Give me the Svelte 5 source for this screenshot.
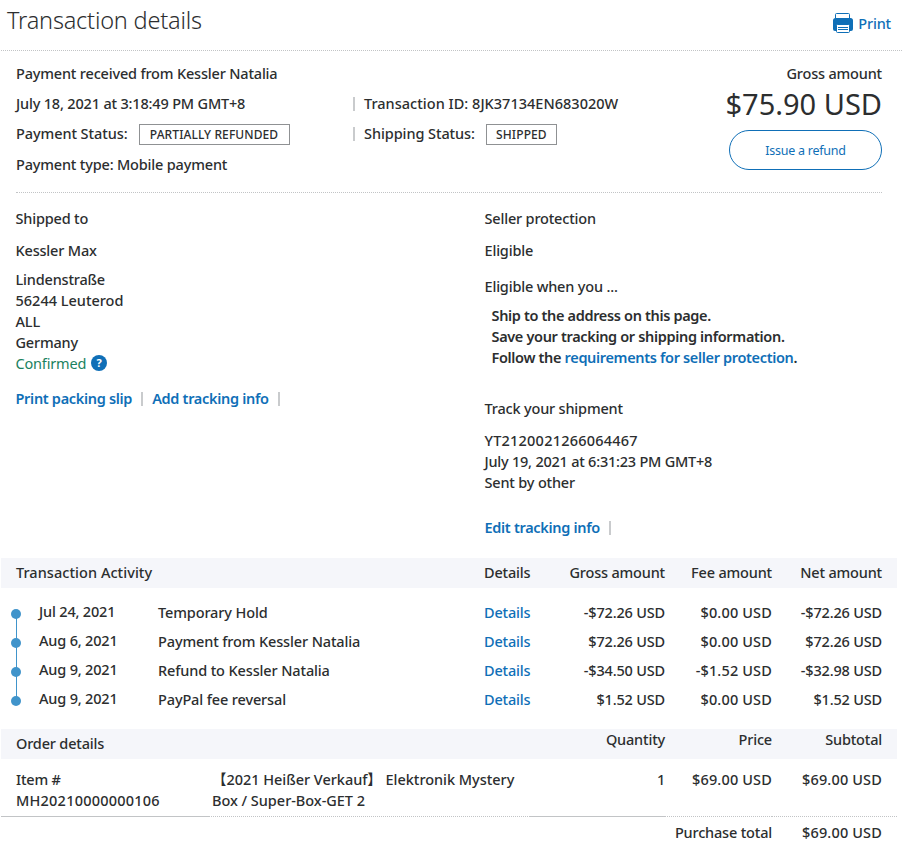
<script lang="ts">
	const activity = [
		{ date: 'Jul 24, 2021', type: 'Temporary Hold', gross: '-$72.26 USD', fee: '$0.00 USD', net: '-$72.26 USD' },
		{ date: 'Aug 6, 2021', type: 'Payment from Kessler Natalia', gross: '$72.26 USD', fee: '$0.00 USD', net: '$72.26 USD' },
		{ date: 'Aug 9, 2021', type: 'Refund to Kessler Natalia', gross: '-$34.50 USD', fee: '-$1.52 USD', net: '-$32.98 USD' },
		{ date: 'Aug 9, 2021', type: 'PayPal fee reversal', gross: '$1.52 USD', fee: '$0.00 USD', net: '$1.52 USD' }
	];
</script>

<div class="page">
	<header>
		<h1>Transaction details</h1>
		<a class="print" href="#print">
			<svg width="20" height="20" viewBox="0 0 20 20">
				<path d="M2.500 5V1.500Q2.500 .5 3.500 .5H15.500Q16.500 .5 16.500 1.500V5" fill="#fff" stroke="#0f6fb7" />
				<path d="M2.500 5h15Q20 5 20 7.500v8.500q0 2-2 2H2q-2 0-2-2V7.500q0-2.500 2.500-2.500z" fill="#0f6fb7" />
				<rect x="3.500" y="11.500" width="13" height="8" rx="1" fill="#fff" stroke="#0f6fb7" />
				<path d="M5 14.500h10M5 16.500h10" stroke="#0f6fb7" />
			</svg>
			<span>Print</span>
		</a>
	</header>

	<section class="summary">
		<div class="facts">
			<div class="line">Payment received from Kessler Natalia</div>
			<div class="line two">
				<span>July 18, 2021 at 3:18:49 PM GMT+8</span>
				<span class="second"><i class="bar"></i><span class="txid">Transaction ID: 8JK37134EN683020W</span></span>
			</div>
			<div class="line two">
				<span class="status"><span class="key">Payment Status:</span><b class="tag partial">PARTIALLY REFUNDED</b></span>
				<span class="second status"><i class="bar"></i><span class="key">Shipping Status:</span><b class="tag shipped">SHIPPED</b></span>
			</div>
			<div class="line last">Payment type: Mobile payment</div>
		</div>
		<div class="gross">
			<div>Gross amount</div>
			<div class="amount">$75.90 USD</div>
			<button type="button">Issue a refund</button>
		</div>
	</section>

	<section class="info">
		<div class="shipping">
			<div class="label">Shipped to</div>
			<div class="name">Kessler Max</div>
			<address>
				<div>Lindenstraße</div>
				<div class="zip">56244 Leuterod</div>
				<div>ALL</div>
				<div>Germany</div>
				<div class="confirmed">Confirmed <span class="help">?</span></div>
			</address>
			<div class="actions">
				<a href="#slip">Print packing slip</a><i class="bar"></i><a href="#track">Add tracking info</a><i class="bar"></i>
			</div>
		</div>
		<div class="protection">
			<div class="label">Seller protection</div>
			<div class="name">Eligible</div>
			<div class="when">Eligible when you ...</div>
			<ul>
				<li>Ship to the address on this page.</li>
				<li>Save your tracking or shipping information.</li>
				<li>Follow the <a href="#req">requirements for seller protection</a>.</li>
			</ul>
			<div class="label">Track your shipment</div>
			<div class="shipment">
				<div class="digits">YT2120021266064467</div>
				<div class="time">July 19, 2021 at 6:31:23 PM GMT+8</div>
				<div>Sent by other</div>
			</div>
			<div class="actions">
				<a href="#edit">Edit tracking info</a><i class="bar"></i>
			</div>
		</div>
	</section>

	<section class="activity">
		<div class="row band">
			<span class="title">Transaction Activity</span>
			<span>Details</span>
			<span class="num">Gross amount</span>
			<span class="num">Fee amount</span>
			<span class="num">Net amount</span>
		</div>
		<div class="rows">
			{#each activity as item}
				<div class="row">
					<span class="dot"></span>
					<span class="date">{item.date}</span>
					<span class="type">{item.type}</span>
					<a href="#details">Details</a>
					<span class="num">{item.gross}</span>
					<span class="num money">{item.fee}</span>
					<span class="num">{item.net}</span>
				</div>
			{/each}
		</div>
	</section>

	<section class="order">
		<div class="order-row band">
			<span class="order-title">Order details</span>
			<span></span>
			<span class="num">Quantity</span>
			<span class="num">Price</span>
			<span class="num">Subtotal</span>
		</div>
		<div class="order-row item">
			<span class="sku">Item #<br /><span class="digits">MH20210000000106</span></span>
			<span class="desc">【2021 Heißer Verkauf】 Elektronik Mystery<br />Box / Super-Box-GET 2</span>
			<span class="num">1</span>
			<span class="num money">$69.00 USD</span>
			<span class="num money">$69.00 USD</span>
		</div>
		<div class="total">
			<span>Purchase total</span>
			<span class="money">$69.00 USD</span>
		</div>
	</section>
</div>

<style>
	:global(body) {
		margin: 0;
		background: #fff;
	}

	.page {
		width: 902px;
		height: 853px;
		overflow: hidden;
		font-family: 'Noto Sans', 'Noto Sans CJK SC', sans-serif;
		font-size: 14.5px;
		font-weight: 500;
		line-height: 21px;
		letter-spacing: -0.18px;
		color: #2c2e2f;
		white-space: nowrap;
	}
	a {
		color: #0f6fb7;
		text-decoration: none;
	}
	.num { text-align: right; }
	.money { letter-spacing: 0.15px; }
	.digits { letter-spacing: 0.22px; }
	.time { letter-spacing: -0.23px; }
	.txid { letter-spacing: 0.02px; }
	.key { letter-spacing: -0.08px; }
	.zip { letter-spacing: 0; }

	/* --- Header --- */
	header {
		display: flex;
		justify-content: space-between;
		height: 51px;
		margin-left: 1px;
		padding: 0 11px 0 6px;
		border-bottom: 1px dotted #c2c4c6;
		box-sizing: border-box;
	}
	h1 {
		margin: 0;
		font-size: 23.5px;
		font-weight: 300;
		line-height: 41px;
		letter-spacing: -0.2px;
	}
	.print {
		display: flex;
		gap: 5px;
		padding-top: 13px;
	}

	/* --- Payment summary --- */
	.summary {
		display: flex;
		justify-content: space-between;
		height: 142px;
		margin: 0 20px 0 16px;
		padding-top: 12px;
		border-bottom: 1px dotted #c2c4c6;
		box-sizing: border-box;
	}
	.line { height: 30px; }
	.line.last { padding-top: 1px; }
	.two {
		display: grid;
		grid-template-columns: 337px auto;
	}
	.second,
	.status {
		display: flex;
		align-items: center;
		height: 21px;
	}
	.bar {
		width: 2px;
		height: 14px;
		background: #c9cbcd;
	}
	.second .bar { margin-right: 9px; }
	.tag {
		position: relative;
		top: 1px;
		height: 21px;
		margin-left: 11px;
		border: 1px solid #8f9193;
		box-sizing: border-box;
		font-size: 12px;
		font-weight: 500;
		line-height: 19px;
		letter-spacing: 0.1px;
		text-align: center;
	}
	.partial { width: 151px; }
	.shipped { width: 71px; }
	.gross { text-align: right; }
	.amount {
		font-size: 29px;
		font-weight: 450;
		line-height: 40px;
		letter-spacing: 0;
	}
	button {
		width: 153px;
		height: 40px;
		margin-top: 6px;
		padding: 0;
		border: 1px solid #0f6fb7;
		border-radius: 20px;
		background: #fff;
		color: #0f6fb7;
		font: 12.5px 'Noto Sans', sans-serif;
		letter-spacing: -0.25px;
	}

	/* --- Shipping and seller protection --- */
	.info {
		display: grid;
		grid-template-columns: 469px auto;
		height: 365px;
		padding: 15px 0 0 15.5px;
		box-sizing: border-box;
	}
	.name { margin-top: 11px; }
	address {
		margin-top: 8px;
		font-style: normal;
	}
	.confirmed {
		display: flex;
		align-items: center;
		gap: 5px;
		color: #1a8260;
		font-weight: 400;
	}
	.help {
		position: relative;
		top: -1px;
		width: 16px;
		height: 16px;
		border-radius: 50%;
		background: #0f6fb7;
		color: #fff;
		font-size: 11px;
		font-weight: 700;
		line-height: 16px;
		text-align: center;
	}
	.actions {
		display: flex;
		align-items: center;
		gap: 9px;
		margin-top: 14px;
		font-weight: 600;
		letter-spacing: -0.31px;
	}
	.when { margin-top: 15px; }
	ul {
		margin: 8px 0 30px;
		padding: 0 0 0 7px;
		list-style: none;
		font-weight: 600;
		letter-spacing: -0.34px;
	}
	.shipment { margin-top: 11px; }
	.protection .actions { margin-top: 24px; }

	/* --- Activity table --- */
	.band {
		height: 30px;
		background: #f5f6fa;
	}
	.row {
		display: grid;
		grid-template-columns: 38px 119px 326px 61px 120px 107px 110px;
		margin: 0 5px 0 1px;
		line-height: 29px;
	}
	.title {
		grid-column: 1 / 4;
		padding-left: 15px;
		letter-spacing: 0.05px;
	}
	.rows { padding: 10px 0 15px; }
	.rows .row { height: 29px; }
	.date {
		position: relative;
		top: -1px;
	}
	.type { letter-spacing: -0.13px; }
	.dot {
		position: relative;
		width: 10px;
		height: 10px;
		margin: 11px 0 0 10px;
		border-radius: 50%;
		background: #4094cb;
	}
	.row:not(:last-child) .dot::after {
		content: '';
		position: absolute;
		left: 5px;
		top: 5px;
		width: 1px;
		height: 29px;
		background: #4094cb;
	}

	/* --- Order table --- */
	.order-row {
		display: grid;
		grid-template-columns: 208px 321px 135px 107px 125px;
		margin: 0 5px 0 1px;
	}
	.order-row > :last-child { padding-right: 15px; }
	.order-title {
		padding-left: 15px;
		line-height: 28px;
	}
	.item { height: 58px; }
	.item > span {
		padding-top: 10px;
		border-bottom: 1px dotted #c2c4c6;
		box-sizing: border-box;
	}
	.item > .sku {
		padding-left: 15px;
		border-bottom-style: solid;
	}
	.item > .desc {
		padding-left: 3px;
		letter-spacing: -0.03px;
	}
	.item > .desc + .num { border-bottom-style: solid; }
	.total {
		display: grid;
		grid-template-columns: auto 110px;
		margin-right: 20px;
		padding-top: 5px;
		text-align: right;
	}
</style>
